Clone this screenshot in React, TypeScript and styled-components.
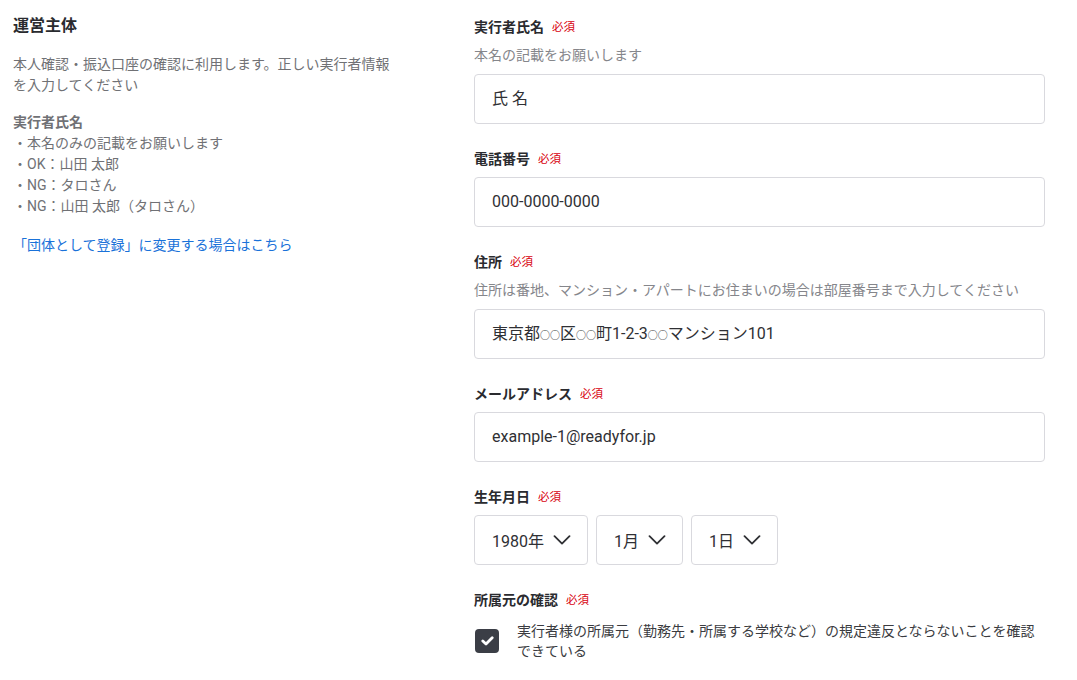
import React from "react";
import styled, { createGlobalStyle } from "styled-components";

const GlobalStyle = createGlobalStyle`
  * { box-sizing: border-box; }
  body {
    margin: 0;
    background: #ffffff;
    font-family: Roboto, "Noto Sans CJK JP", sans-serif;
    color: #333333;
  }
`;

const Page = styled.div`
  display: grid;
  grid-template-columns: 385px 1fr;
  column-gap: 76px;
  padding: 0 32px 0 13px;
`;

const Aside = styled.aside`
  padding-top: 14px;
  display: flex;
  flex-direction: column;
`;

const AsideTitle = styled.h2`
  margin: 0 0 16px;
  font-size: 16px;
  line-height: 24px;
  font-weight: 700;
  color: #2a2b2f;
`;

const AsideText = styled.p`
  margin: 0 0 16px;
  font-size: 14px;
  line-height: 21px;
  color: #707175;
`;

const AsideHeading = styled.div`
  font-size: 14px;
  line-height: 21px;
  font-weight: 700;
  color: #707175;
`;

const AsideList = styled.ul`
  margin: 0 0 18px;
  padding: 0;
  list-style: none;
  font-size: 14px;
  line-height: 21px;
  color: #707175;
`;

const AsideLink = styled.a`
  font-size: 14px;
  line-height: 21px;
  color: #1a72d9;
  text-decoration: none;
`;

const Form = styled.form`
  padding-top: 16px;
  display: flex;
  flex-direction: column;
  gap: 24px;
`;

const Field = styled.div`
  display: flex;
  flex-direction: column;
`;

const Label = styled.div`
  display: flex;
  align-items: center;
  gap: 8px;
  height: 20px;
  margin-bottom: 9px;
  font-size: 14px;
  font-weight: 700;
  color: #2a2b2f;
`;

const Required = styled.span`
  font-size: 11.5px;
  font-weight: 400;
  color: #d8000f;
`;

const Hint = styled.div`
  font-size: 14px;
  line-height: 20px;
  margin-bottom: 9px;
  color: #85868b;
`;

const TextInput = styled.div`
  height: 50px;
  padding: 0 17px;
  border: 1px solid #d9d9de;
  border-radius: 4px;
  font-size: 16px;
  line-height: 47px;
  white-space: nowrap;
  color: #2f3034;
`;

/* small round marks used as placeholders inside the address sample */
const Blank = styled.span`
  font-family: "Noto Sans CJK JP", sans-serif;
  font-size: 10px;
`;

const SelectRow = styled.div`
  display: flex;
  gap: 8px;
`;

const SelectBox = styled.div<{ $width: number }>`
  display: flex;
  align-items: center;
  justify-content: space-between;
  width: ${(p) => p.$width}px;
  height: 50px;
  padding: 0 16px 0 17px;
  border: 1px solid #d9d9de;
  border-radius: 4px;
  font-size: 16px;
  color: #2f3034;
`;

const CheckRow = styled.label`
  display: flex;
  align-items: center;
  gap: 18px;
  padding-left: 1px;
  margin-top: 3px;
`;

const CheckBox = styled.span`
  flex: none;
  display: flex;
  align-items: center;
  justify-content: center;
  width: 24px;
  height: 24px;
  border-radius: 4px;
  background: #3b3e46;
`;

const CheckText = styled.span`
  font-size: 14px;
  line-height: 20px;
  color: #3a3b40;
`;

const Chevron = () => (
  <svg width="18" height="10" viewBox="0 0 18 10" fill="none">
    <path d="M1.5 1.2 L9 8.6 L16.5 1.2" stroke="#2f3034" strokeWidth="1.8" strokeLinecap="round" strokeLinejoin="round" />
  </svg>
);

const Check = () => (
  <svg width="13" height="10" viewBox="0 0 13 10" fill="none">
    <path d="M1.8 5 L5 8 L11.2 1.8" stroke="#ffffff" strokeWidth="2.8" strokeLinecap="round" strokeLinejoin="round" />
  </svg>
);

const Req = () => <Required>必須</Required>;

export default function App() {
  return (
    <>
      <GlobalStyle />
      <Page>
        <Aside>
          <AsideTitle>運営主体</AsideTitle>
          <AsideText>本人確認・振込口座の確認に利用します。正しい実行者情報を入力してください</AsideText>
          <AsideHeading>実行者氏名</AsideHeading>
          <AsideList>
            <li>・本名のみの記載をお願いします</li>
            <li>・OK：山田 太郎</li>
            <li>・NG：タロさん</li>
            <li>・NG：山田 太郎（タロさん）</li>
          </AsideList>
          <AsideLink href="#">「団体として登録」に変更する場合はこちら</AsideLink>
        </Aside>

        <Form>
          <Field>
            <Label>実行者氏名<Req /></Label>
            <Hint>本名の記載をお願いします</Hint>
            <TextInput>氏 名</TextInput>
          </Field>
          <Field>
            <Label>電話番号<Req /></Label>
            <TextInput>000-0000-0000</TextInput>
          </Field>
          <Field>
            <Label>住所<Req /></Label>
            <Hint>住所は番地、マンション・アパートにお住まいの場合は部屋番号まで入力してください</Hint>
            <TextInput>
              東京都<Blank>○○</Blank>区<Blank>○○</Blank>町1-2-3<Blank>○○</Blank>マンション101
            </TextInput>
          </Field>
          <Field>
            <Label>メールアドレス<Req /></Label>
            <TextInput>example-1@readyfor.jp</TextInput>
          </Field>
          <Field>
            <Label>生年月日<Req /></Label>
            <SelectRow>
              <SelectBox $width={114}>1980年<Chevron /></SelectBox>
              <SelectBox $width={87}>1月<Chevron /></SelectBox>
              <SelectBox $width={87}>1日<Chevron /></SelectBox>
            </SelectRow>
          </Field>
          <Field>
            <Label>所属元の確認<Req /></Label>
            <CheckRow>
              <CheckBox><Check /></CheckBox>
              <CheckText>実行者様の所属元（勤務先・所属する学校など）の規定違反とならないことを確認できている</CheckText>
            </CheckRow>
          </Field>
        </Form>
      </Page>
    </>
  );
}
